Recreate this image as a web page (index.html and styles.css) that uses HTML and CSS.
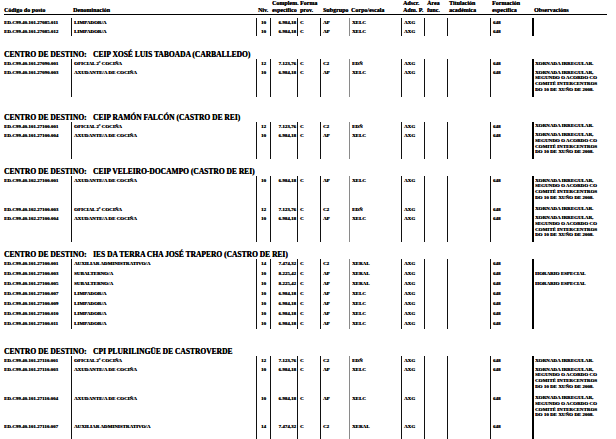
FILE: index.html
```html
<!DOCTYPE html>
<html lang="gl">
<head>
<meta charset="utf-8">
<title>Relación de postos</title>
<link rel="stylesheet" href="styles.css">
</head>
<body>
<main class="page">
  <div class="head">
    <div class="h h-code">Código do posto</div>
    <div class="h h-den">Denominación</div>
    <div class="h h-niv">Niv.</div>
    <div class="h h-comp">Complem.<br>específico</div>
    <div class="h h-forma">Forma<br>prov.</div>
    <div class="h h-sub">Subgrupo</div>
    <div class="h h-corpo">Corpo/escala</div>
    <div class="h h-ads">Adscr.<br>Adm. P.</div>
    <div class="h h-area">Área<br>func.</div>
    <div class="h h-tit">Titulación<br>académica</div>
    <div class="h h-form">Formación<br>específica</div>
    <div class="h h-obs">Observacións</div>
  </div>

  <div class="block first">
    <div class="row">
      <div class="c c-code">ED.C99.40.101.27085.011</div><div class="c c-den">LIMPADOR/A</div><div class="c c-niv">10</div><div class="c c-comp">6.984,18</div><div class="c c-forma">C</div><div class="c c-sub">AP</div><div class="c c-corpo">XELC</div><div class="c c-ads">AXG</div><div class="c c-area"></div><div class="c c-tit"></div><div class="c c-form">648</div><div class="c c-obs"></div>
    </div>
    <div class="row">
      <div class="c c-code">ED.C99.40.101.27085.012</div><div class="c c-den">LIMPADOR/A</div><div class="c c-niv">10</div><div class="c c-comp">6.984,18</div><div class="c c-forma">C</div><div class="c c-sub">AP</div><div class="c c-corpo">XELC</div><div class="c c-ads">AXG</div><div class="c c-area"></div><div class="c c-tit"></div><div class="c c-form">648</div><div class="c c-obs"></div>
    </div>
  </div>

  <section class="centro s2">
    <h2 class="centro-title"><span class="lbl">CENTRO DE DESTINO:</span>CEIP XOSÉ LUIS TABOADA (CARBALLEDO)</h2>
    <div class="block">
      <div class="row">
        <div class="c c-code">ED.C99.40.101.27090.001</div><div class="c c-den">OFICIAL 2ª COCIÑA</div><div class="c c-niv">12</div><div class="c c-comp">7.123,76</div><div class="c c-forma">C</div><div class="c c-sub">C2</div><div class="c c-corpo">EDÑ</div><div class="c c-ads">AXG</div><div class="c c-area"></div><div class="c c-tit"></div><div class="c c-form">648</div><div class="c c-obs">XORNADA IRREGULAR.</div>
      </div>
      <div class="row tall">
        <div class="c c-code">ED.C99.40.101.27090.003</div><div class="c c-den">AXUDANTE/A DE COCIÑA</div><div class="c c-niv">10</div><div class="c c-comp">6.984,18</div><div class="c c-forma">C</div><div class="c c-sub">AP</div><div class="c c-corpo">XELC</div><div class="c c-ads">AXG</div><div class="c c-area"></div><div class="c c-tit"></div><div class="c c-form">648</div><div class="c c-obs">XORNADA IRREGULAR,<br>SEGUNDO O ACORDO CO<br>COMITÉ INTERCENTROS<br>DO 10 DE XUÑO DE 2008.</div>
      </div>
    </div>
  </section>

  <section class="centro s3">
    <h2 class="centro-title"><span class="lbl">CENTRO DE DESTINO:</span>CEIP RAMÓN FALCÓN (CASTRO DE REI)</h2>
    <div class="block">
      <div class="row">
        <div class="c c-code">ED.C99.40.101.27100.001</div><div class="c c-den">OFICIAL 2ª COCIÑA</div><div class="c c-niv">12</div><div class="c c-comp">7.123,76</div><div class="c c-forma">C</div><div class="c c-sub">C2</div><div class="c c-corpo">EDÑ</div><div class="c c-ads">AXG</div><div class="c c-area"></div><div class="c c-tit"></div><div class="c c-form">648</div><div class="c c-obs">XORNADA IRREGULAR.</div>
      </div>
      <div class="row tall">
        <div class="c c-code">ED.C99.40.101.27100.004</div><div class="c c-den">AXUDANTE/A DE COCIÑA</div><div class="c c-niv">10</div><div class="c c-comp">6.984,18</div><div class="c c-forma">C</div><div class="c c-sub">AP</div><div class="c c-corpo">XELC</div><div class="c c-ads">AXG</div><div class="c c-area"></div><div class="c c-tit"></div><div class="c c-form">648</div><div class="c c-obs">XORNADA IRREGULAR,<br>SEGUNDO O ACORDO CO<br>COMITÉ INTERCENTROS<br>DO 10 DE XUÑO DE 2008.</div>
      </div>
    </div>
  </section>

  <section class="centro s4">
    <h2 class="centro-title"><span class="lbl">CENTRO DE DESTINO:</span>CEIP VELEIRO-DOCAMPO (CASTRO DE REI)</h2>
    <div class="block">
      <div class="row tall">
        <div class="c c-code">ED.C99.40.102.27100.001</div><div class="c c-den">AXUDANTE/A DE COCIÑA</div><div class="c c-niv">10</div><div class="c c-comp">6.984,18</div><div class="c c-forma">C</div><div class="c c-sub">AP</div><div class="c c-corpo">XELC</div><div class="c c-ads">AXG</div><div class="c c-area"></div><div class="c c-tit"></div><div class="c c-form">648</div><div class="c c-obs">XORNADA IRREGULAR,<br>SEGUNDO O ACORDO CO<br>COMITÉ INTERCENTROS<br>DO 10 DE XUÑO DE 2008.</div>
      </div>
      <div class="row">
        <div class="c c-code">ED.C99.40.102.27100.003</div><div class="c c-den">OFICIAL 2ª COCIÑA</div><div class="c c-niv">12</div><div class="c c-comp">7.123,76</div><div class="c c-forma">C</div><div class="c c-sub">C2</div><div class="c c-corpo">EDÑ</div><div class="c c-ads">AXG</div><div class="c c-area"></div><div class="c c-tit"></div><div class="c c-form">648</div><div class="c c-obs">XORNADA IRREGULAR.</div>
      </div>
      <div class="row tall">
        <div class="c c-code">ED.C99.40.102.27100.004</div><div class="c c-den">AXUDANTE/A DE COCIÑA</div><div class="c c-niv">10</div><div class="c c-comp">6.984,18</div><div class="c c-forma">C</div><div class="c c-sub">AP</div><div class="c c-corpo">XELC</div><div class="c c-ads">AXG</div><div class="c c-area"></div><div class="c c-tit"></div><div class="c c-form">648</div><div class="c c-obs">XORNADA IRREGULAR,<br>SEGUNDO O ACORDO CO<br>COMITÉ INTERCENTROS<br>DO 10 DE XUÑO DE 2008.</div>
      </div>
    </div>
  </section>

  <section class="centro s5">
    <h2 class="centro-title"><span class="lbl">CENTRO DE DESTINO:</span>IES DA TERRA CHA JOSÉ TRAPERO (CASTRO DE REI)</h2>
    <div class="block loose">
      <div class="row">
        <div class="c c-code">ED.C99.40.101.27100.001</div><div class="c c-den">AUXILIAR ADMINISTRATIVO/A</div><div class="c c-niv">14</div><div class="c c-comp">7.474,32</div><div class="c c-forma">C</div><div class="c c-sub">C2</div><div class="c c-corpo">XERAL</div><div class="c c-ads">AXG</div><div class="c c-area"></div><div class="c c-tit"></div><div class="c c-form">648</div><div class="c c-obs"></div>
      </div>
      <div class="row">
        <div class="c c-code">ED.C99.40.101.27100.003</div><div class="c c-den">SUBALTERNO/A</div><div class="c c-niv">10</div><div class="c c-comp">8.225,42</div><div class="c c-forma">C</div><div class="c c-sub">AP</div><div class="c c-corpo">XERAL</div><div class="c c-ads">AXG</div><div class="c c-area"></div><div class="c c-tit"></div><div class="c c-form">648</div><div class="c c-obs">HORARIO ESPECIAL</div>
      </div>
      <div class="row">
        <div class="c c-code">ED.C99.40.101.27100.005</div><div class="c c-den">SUBALTERNO/A</div><div class="c c-niv">10</div><div class="c c-comp">8.225,42</div><div class="c c-forma">C</div><div class="c c-sub">AP</div><div class="c c-corpo">XERAL</div><div class="c c-ads">AXG</div><div class="c c-area"></div><div class="c c-tit"></div><div class="c c-form">648</div><div class="c c-obs">HORARIO ESPECIAL</div>
      </div>
      <div class="row">
        <div class="c c-code">ED.C99.40.101.27100.007</div><div class="c c-den">LIMPADOR/A</div><div class="c c-niv">10</div><div class="c c-comp">6.984,18</div><div class="c c-forma">C</div><div class="c c-sub">AP</div><div class="c c-corpo">XELC</div><div class="c c-ads">AXG</div><div class="c c-area"></div><div class="c c-tit"></div><div class="c c-form">648</div><div class="c c-obs"></div>
      </div>
      <div class="row">
        <div class="c c-code">ED.C99.40.101.27100.009</div><div class="c c-den">LIMPADOR/A</div><div class="c c-niv">10</div><div class="c c-comp">6.984,18</div><div class="c c-forma">C</div><div class="c c-sub">AP</div><div class="c c-corpo">XELC</div><div class="c c-ads">AXG</div><div class="c c-area"></div><div class="c c-tit"></div><div class="c c-form">648</div><div class="c c-obs"></div>
      </div>
      <div class="row">
        <div class="c c-code">ED.C99.40.101.27100.010</div><div class="c c-den">LIMPADOR/A</div><div class="c c-niv">10</div><div class="c c-comp">6.984,18</div><div class="c c-forma">C</div><div class="c c-sub">AP</div><div class="c c-corpo">XELC</div><div class="c c-ads">AXG</div><div class="c c-area"></div><div class="c c-tit"></div><div class="c c-form">648</div><div class="c c-obs"></div>
      </div>
      <div class="row">
        <div class="c c-code">ED.C99.40.101.27100.011</div><div class="c c-den">LIMPADOR/A</div><div class="c c-niv">10</div><div class="c c-comp">6.984,18</div><div class="c c-forma">C</div><div class="c c-sub">AP</div><div class="c c-corpo">XELC</div><div class="c c-ads">AXG</div><div class="c c-area"></div><div class="c c-tit"></div><div class="c c-form">648</div><div class="c c-obs"></div>
      </div>
    </div>
  </section>

  <section class="centro s6">
    <h2 class="centro-title"><span class="lbl">CENTRO DE DESTINO:</span>CPI PLURILINGÜE DE CASTROVERDE</h2>
    <div class="block">
      <div class="row">
        <div class="c c-code">ED.C99.40.101.27110.001</div><div class="c c-den">OFICIAL 2ª COCIÑA</div><div class="c c-niv">12</div><div class="c c-comp">7.123,76</div><div class="c c-forma">C</div><div class="c c-sub">C2</div><div class="c c-corpo">EDÑ</div><div class="c c-ads">AXG</div><div class="c c-area"></div><div class="c c-tit"></div><div class="c c-form">648</div><div class="c c-obs">XORNADA IRREGULAR.</div>
      </div>
      <div class="row tall">
        <div class="c c-code">ED.C99.40.101.27110.003</div><div class="c c-den">AXUDANTE/A DE COCIÑA</div><div class="c c-niv">10</div><div class="c c-comp">6.984,18</div><div class="c c-forma">C</div><div class="c c-sub">AP</div><div class="c c-corpo">XELC</div><div class="c c-ads">AXG</div><div class="c c-area"></div><div class="c c-tit"></div><div class="c c-form">648</div><div class="c c-obs">XORNADA IRREGULAR,<br>SEGUNDO O ACORDO CO<br>COMITÉ INTERCENTROS<br>DO 10 DE XUÑO DE 2008.</div>
      </div>
      <div class="row tall">
        <div class="c c-code">ED.C99.40.101.27110.004</div><div class="c c-den">AXUDANTE/A DE COCIÑA</div><div class="c c-niv">10</div><div class="c c-comp">6.984,18</div><div class="c c-forma">C</div><div class="c c-sub">AP</div><div class="c c-corpo">XELC</div><div class="c c-ads">AXG</div><div class="c c-area"></div><div class="c c-tit"></div><div class="c c-form">648</div><div class="c c-obs">XORNADA IRREGULAR,<br>SEGUNDO O ACORDO CO<br>COMITÉ INTERCENTROS<br>DO 10 DE XUÑO DE 2008.</div>
      </div>
      <div class="row tall">
        <div class="c c-code">ED.C99.40.101.27110.007</div><div class="c c-den">AUXILIAR ADMINISTRATIVO/A</div><div class="c c-niv">14</div><div class="c c-comp">7.474,32</div><div class="c c-forma">C</div><div class="c c-sub">C2</div><div class="c c-corpo">XERAL</div><div class="c c-ads">AXG</div><div class="c c-area"></div><div class="c c-tit"></div><div class="c c-form">648</div><div class="c c-obs"></div>
      </div>
    </div>
  </section>
</main>
</body>
</html>
```

FILE: styles.css
```css
* { box-sizing: border-box; }

html, body {
  margin: 0;
  padding: 0;
  background: #fff;
}

body {
  width: 616px;
  height: 439px;
  overflow: hidden;
  font-family: "Liberation Serif", "Times New Roman", serif;
  font-weight: bold;
  color: #000;
}

.page {
  padding-left: 4px;
}

.head,
.row {
  display: grid;
  grid-template-columns: 67px 185px 14px 27px 23px 29px 52px 23px 23px 43px 42px 75px;
  width: 603px;
}

/* column header */
.head {
  height: 15px;
  border-bottom: 1px solid #000;
  align-items: end;
  font-size: 6px;
  line-height: 7px;
  text-shadow: 0.2px 0 0 #000;
}

.h {
  white-space: nowrap;
  padding-left: 2px;
}
.h-code { padding-left: 0; }
.h-forma, .h-sub, .h-area { padding-left: 3px; }

/* data blocks */
.block.first { margin-top: 3px; }

.row {
  height: 9px;
  font-size: 5px;
  line-height: 9px;
  text-shadow: 0.25px 0 0 #000;
}
.row.tall { height: 28.5px; }
.block.loose .row {
  height: 10px;
  line-height: 10px;
}

.c {
  white-space: nowrap;
  padding-left: 2px;
  border-left: 1px solid #111;
}
.c-code { border-left: 0; padding-left: 0; }
.c-niv { text-align: center; padding-left: 0; }
.c-comp { text-align: right; padding: 0 1px 0 0; }
.c-corpo { border-left-color: #8a8a8a; }
.c-obs {
  border-left: 2px solid #000;
  padding-left: 1px;
  padding-top: 1.6px;
  line-height: 5.8px;
}

/* "Centro de destino" headings */
.centro-title {
  margin: 0;
  font-size: 7.5px;
  line-height: 9px;
  font-weight: bold;
  white-space: nowrap;
  text-shadow: 0.2px 0 0 #000;
}
.lbl {
  display: inline-block;
  width: 89px;
}

.s2 { margin-top: 14px; }
.s3 { margin-top: 16px; }
.s4 { margin-top: 8px; }
.s5 { margin-top: 8px; }
.s6 { margin-top: 18px; }
```
